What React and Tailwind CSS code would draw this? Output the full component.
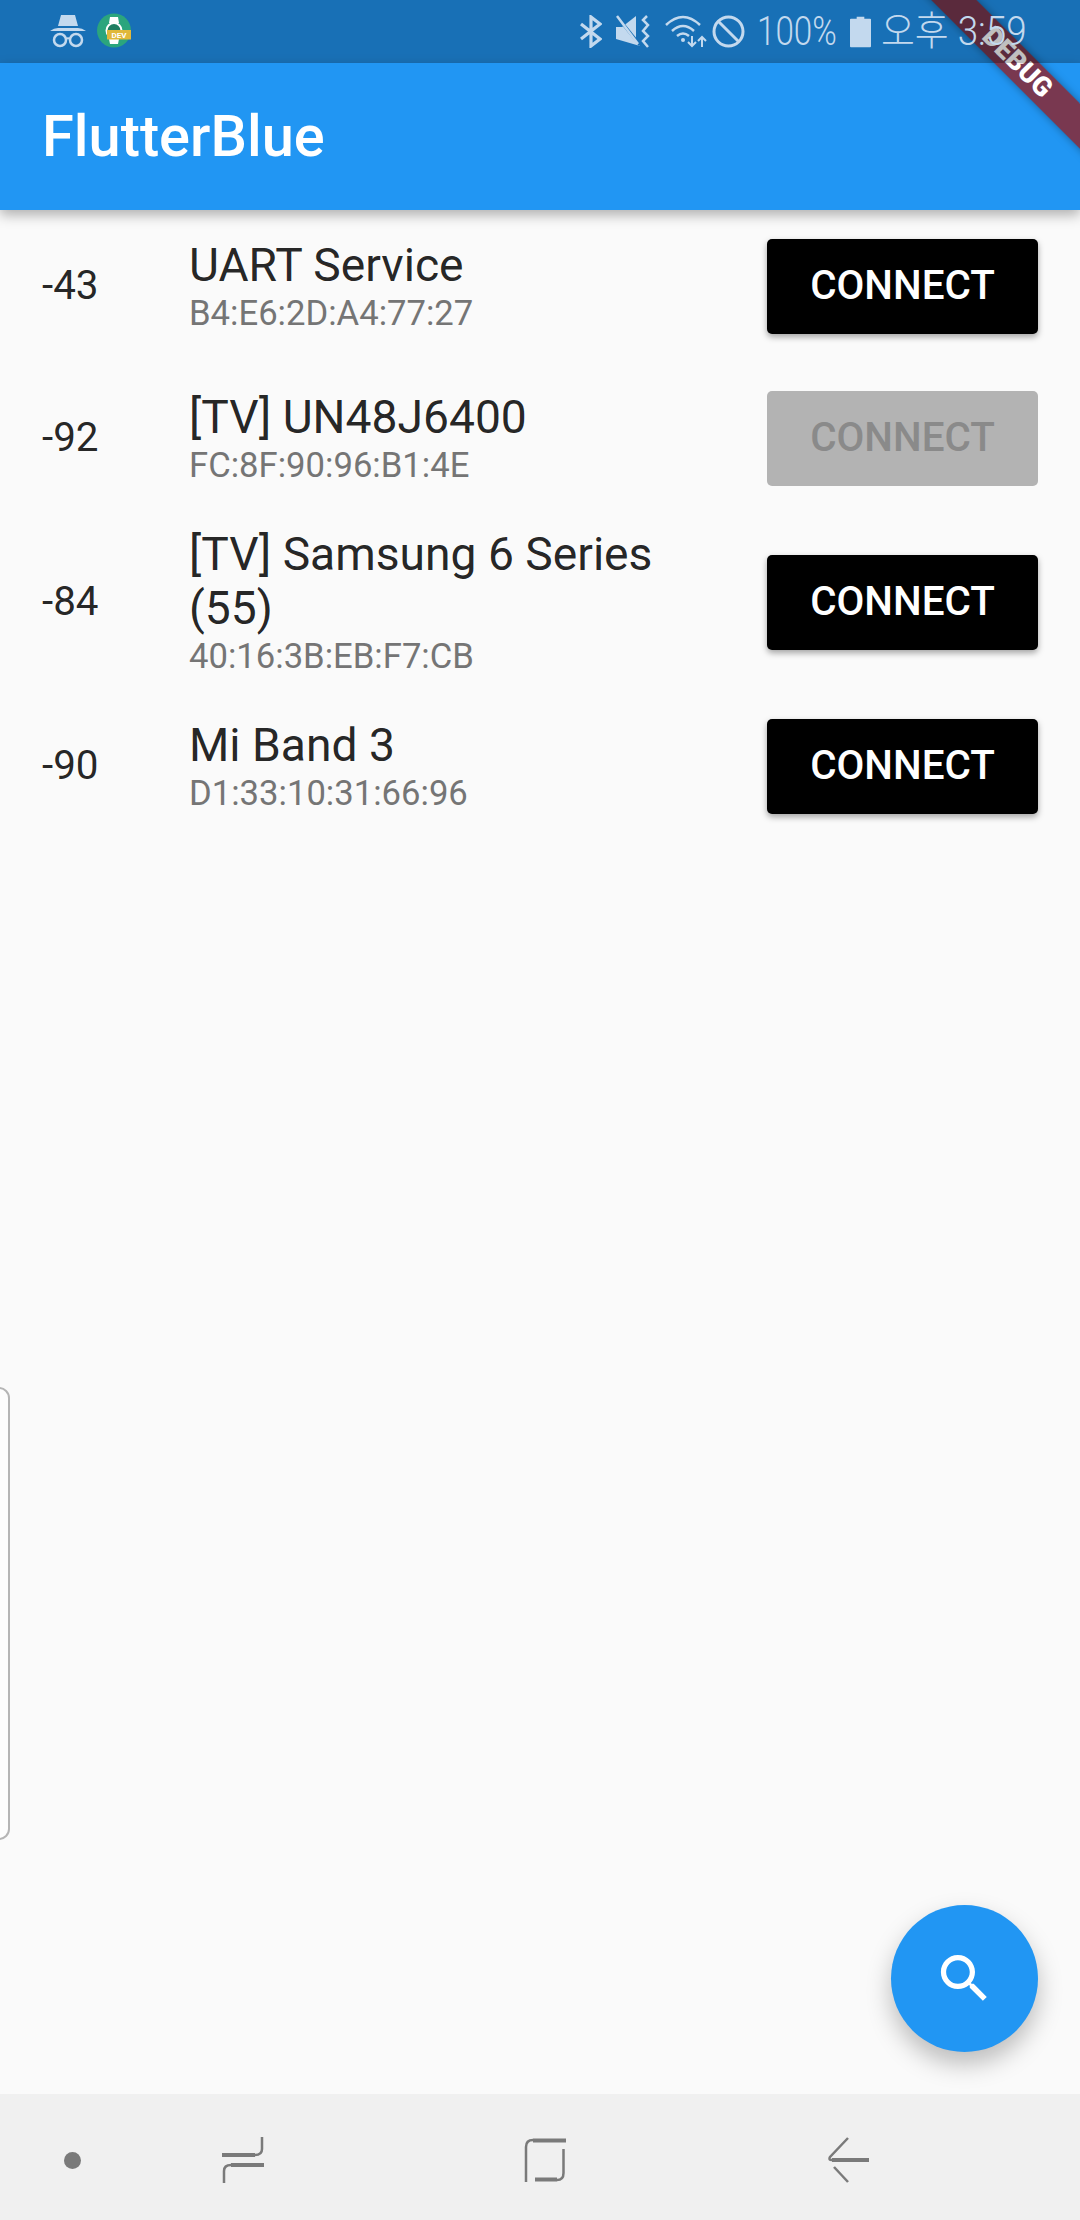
const devices = [
  { rssi: '-43', name: 'UART Service', id: 'B4:E6:2D:A4:77:27', enabled: true },
  { rssi: '-92', name: '[TV] UN48J6400', id: 'FC:8F:90:96:B1:4E', enabled: false },
  { rssi: '-84', name: '[TV] Samsung 6 Series (55)', id: '40:16:3B:EB:F7:CB', enabled: true },
  { rssi: '-90', name: 'Mi Band 3', id: 'D1:33:10:31:66:96', enabled: true },
];

function Incognito() {
  return (
    <svg width="36" height="34" viewBox="0 0 36 34" fill="none" className="text-[#c3d9ee]">
      <path d="M11 1 H25 L28 12 H8 Z" fill="currentColor" />
      <path d="M0 17 Q4 14 8 14 H28 Q32 14 36 17 Z" fill="currentColor" />
      <circle cx="10" cy="26" r="6" stroke="currentColor" strokeWidth="2.5" />
      <circle cx="26" cy="26" r="6" stroke="currentColor" strokeWidth="2.5" />
      <path d="M15.5 25 Q18 23.5 20.5 25" stroke="currentColor" strokeWidth="2" />
    </svg>
  );
}

function DevAppIcon() {
  return (
    <svg width="35" height="35" viewBox="0 0 35 35">
      <circle cx="17" cy="17.5" r="17" fill="#2ba57d" />
      <path d="M13 4 H21 L22 10 H12 Z M12 26 H22 L21 31 H13 Z" fill="#fff" />
      <circle cx="17" cy="17.5" r="7.5" fill="#1f7f62" stroke="#fff" strokeWidth="2" />
      <rect x="10" y="17" width="24" height="9.5" fill="#e0b83a" />
      <text x="22" y="25" fontSize="8" fontWeight="700" textAnchor="middle" fill="#fff" fontFamily="Roboto, sans-serif">DEV</text>
    </svg>
  );
}

function StatusIcons() {
  return (
    <div className="flex items-center">
      {/* bluetooth */}
      <svg width="22" height="33" viewBox="0 0 22 33" fill="none" stroke="#c3d9ee" strokeWidth="3.2" className="ml-[580px] mr-[14px]">
        <path d="M1 9 L20 24 L11 31 V2 L20 9 L1 24" />
      </svg>
      {/* mute + vibrate */}
      <svg width="35" height="33" viewBox="0 0 35 33" fill="none" className="mr-[14px]">
        <path d="M0 12 H6 L20 1 V26 L24 31 L0 24 Z" fill="#c3d9ee" />
        <path d="M3 4 L24 30" stroke="#1970b6" strokeWidth="3" />
        <path d="M1 1 L22 29" stroke="#c3d9ee" strokeWidth="2.5" />
        <path d="M31 1 L27 5 L32 10 L27 16 L32 21 L27 26 L32 32" stroke="#c3d9ee" strokeWidth="2.5" />
      </svg>
      {/* wifi with arrows */}
      <svg width="42" height="33" viewBox="0 0 42 33" fill="none" stroke="#c3d9ee" strokeWidth="2.5" className="mr-[5px]">
        <path d="M1 10 Q18 -6 35 10" />
        <path d="M7 16 Q18 6 29 16" />
        <path d="M12 21 Q18 16 24 21" />
        <circle cx="18" cy="25" r="2" fill="#c3d9ee" stroke="none" />
        <path d="M27 21 V30 M23 27 L27 31 L31 27" strokeWidth="2" />
        <path d="M37 32 V22 M33 26 L37 22 L41 26" strokeWidth="2" />
      </svg>
      {/* do not disturb */}
      <svg width="33" height="33" viewBox="0 0 33 33" fill="none" stroke="#c3d9ee" strokeWidth="3" className="mr-[12px]">
        <circle cx="16.5" cy="16.5" r="14.5" />
        <path d="M6.5 6.5 L26.5 26.5" />
      </svg>
      <span className="mr-[15px] inline-block w-[78px] origin-left scale-x-[0.83] text-[40px] leading-none font-light text-[#c3d9ee]">100%</span>
      {/* battery */}
      <svg width="21" height="32" viewBox="0 0 22 32" className="mr-[10px]">
        <path d="M7 0 H15 V2 H21 Q22 2 22 3 V31 Q22 32 21 32 H1 Q0 32 0 31 V3 Q0 2 1 2 H7 Z" fill="#c3d9ee" />
      </svg>
      <span className="inline-block w-[145px] origin-left scale-x-[0.92] text-[40px] leading-none font-light whitespace-nowrap text-[#c3d9ee] [font-family:Roboto,'Noto_Sans_CJK_KR',sans-serif]">오후 3:59</span>
    </div>
  );
}

function DeviceRow({ rssi, name, id, enabled }) {
  return (
    <div className="flex min-h-[152px] items-center py-[12.5px] pr-[42px] pl-[42px]">
      <div className="w-[147px] shrink-0 text-[40.4px] leading-none text-black/87">{rssi}</div>
      <div className="min-w-0 flex-1 pr-[60px]">
        <div className="text-[46.2px] leading-[54px] text-black/87">{name}</div>
        <div className="text-[34.65px] leading-[43px] text-[#757575]">{id}</div>
      </div>
      <button
        className={`h-[95px] w-[271px] shrink-0 rounded-[5px] text-[40.4px] font-medium ${
          enabled ? 'bg-black text-white shadow-[0_3px_6px_rgba(0,0,0,0.35)]' : 'bg-[#b3b3b3] text-[#8a8a8a]'
        }`}
      >
        CONNECT
      </button>
    </div>
  );
}

export default function App() {
  return (
    <div className="relative flex h-[2220px] w-[1080px] flex-col overflow-hidden bg-[#fafafa] [font-family:Roboto,sans-serif]">
      <div className="shrink-0 bg-[#2196f3]">
        {/* Status bar, translucent over the ribbon */}
        <div className="relative z-40 flex h-[63px] items-center bg-black/25">
          <div className="absolute top-[13px] left-[50px] flex items-center gap-[11px]">
            <Incognito />
            <DevAppIcon />
          </div>
          <StatusIcons />
        </div>

        {/* App bar */}
        <div className="relative z-10 flex h-[147px] items-center bg-[#2196f3] pl-[42px] shadow-[0_5px_12px_rgba(0,0,0,0.3)]">
          <h1 className="text-[57.75px] leading-none font-medium text-white">FlutterBlue</h1>
        </div>
      </div>

      {/* Results */}
      <div className="flex-1">
        {devices.map((d) => (
          <DeviceRow key={d.id} {...d} />
        ))}
      </div>

      {/* Nav bar */}
      <div className="relative h-[126px] shrink-0 bg-[#f0f0f0]">
        <div className="flex h-full items-center pt-[6px]">
          <div className="ml-[64px] h-[17px] w-[17px] rounded-full bg-[#7a7a7a]" />
          <svg width="42" height="46" viewBox="0 0 42 46" fill="none" stroke="#7a7a7a" className="ml-[141px]">
            <path d="M0 18 H33" strokeWidth="4" />
            <path d="M33 18 Q40 18 40 12 V0" strokeWidth="2.5" />
            <path d="M42 28 H9" strokeWidth="4" />
            <path d="M9 28 Q2 28 2 34 V46" strokeWidth="2.5" />
          </svg>
          <svg width="42" height="44" viewBox="0 0 42 44" fill="none" stroke="#7a7a7a" className="ml-[260px]">
            <path d="M42 2.5 H9" strokeWidth="4" />
            <path d="M9 2 Q2 2 2 9 V44" strokeWidth="2.5" />
            <path d="M39.5 11 V35 Q39.5 42 33 42" strokeWidth="2.5" />
            <path d="M33 41.5 H11" strokeWidth="4" />
          </svg>
          <svg width="42" height="46" viewBox="0 0 42 46" fill="none" stroke="#7a7a7a" className="ml-[261px]">
            <path d="M21 1 L3 20 Q1 23 5 23" strokeWidth="2.5" />
            <path d="M5 23 H42" strokeWidth="4" />
            <path d="M7 30 L21 45" strokeWidth="2.5" />
          </svg>
        </div>
      </div>

      {/* Edge panel handle */}
      <div className="absolute top-[1387px] left-[-12px] h-[453px] w-[22px] rounded-[14px] border-2 border-[#b5b5b5] bg-white/50" />

      {/* Scan button */}
      <button className="absolute top-[1905px] left-[891px] z-20 flex h-[147px] w-[147px] items-center justify-center rounded-full bg-[#2196f3] text-white shadow-[0_12px_24px_rgba(0,0,0,0.25)]">
        <svg width="63" height="63" viewBox="0 0 24 24" fill="currentColor">
          <path d="M15.5 14h-.79l-.28-.27C15.41 12.59 16 11.11 16 9.5 16 5.91 13.09 3 9.5 3S3 5.91 3 9.5 5.91 16 9.5 16c1.61 0 3.09-.59 4.23-1.57l.27.28v.79l5 4.99L20.49 19l-4.99-5zm-6 0C7.01 14 5 11.99 5 9.5S7.01 5 9.5 5 14 7.01 14 9.5 11.99 14 9.5 14z" />
        </svg>
      </button>

      {/* Debug ribbon */}
      <div className="absolute top-[47px] left-[817px] z-30 flex h-[31.5px] w-[400px] rotate-45 items-center justify-center bg-[#961a1d]/76 shadow-[0_0_8px_rgba(0,0,0,0.35)]">
        <span className="text-[27px] leading-none font-black text-white">DEBUG</span>
      </div>
    </div>
  );
}
